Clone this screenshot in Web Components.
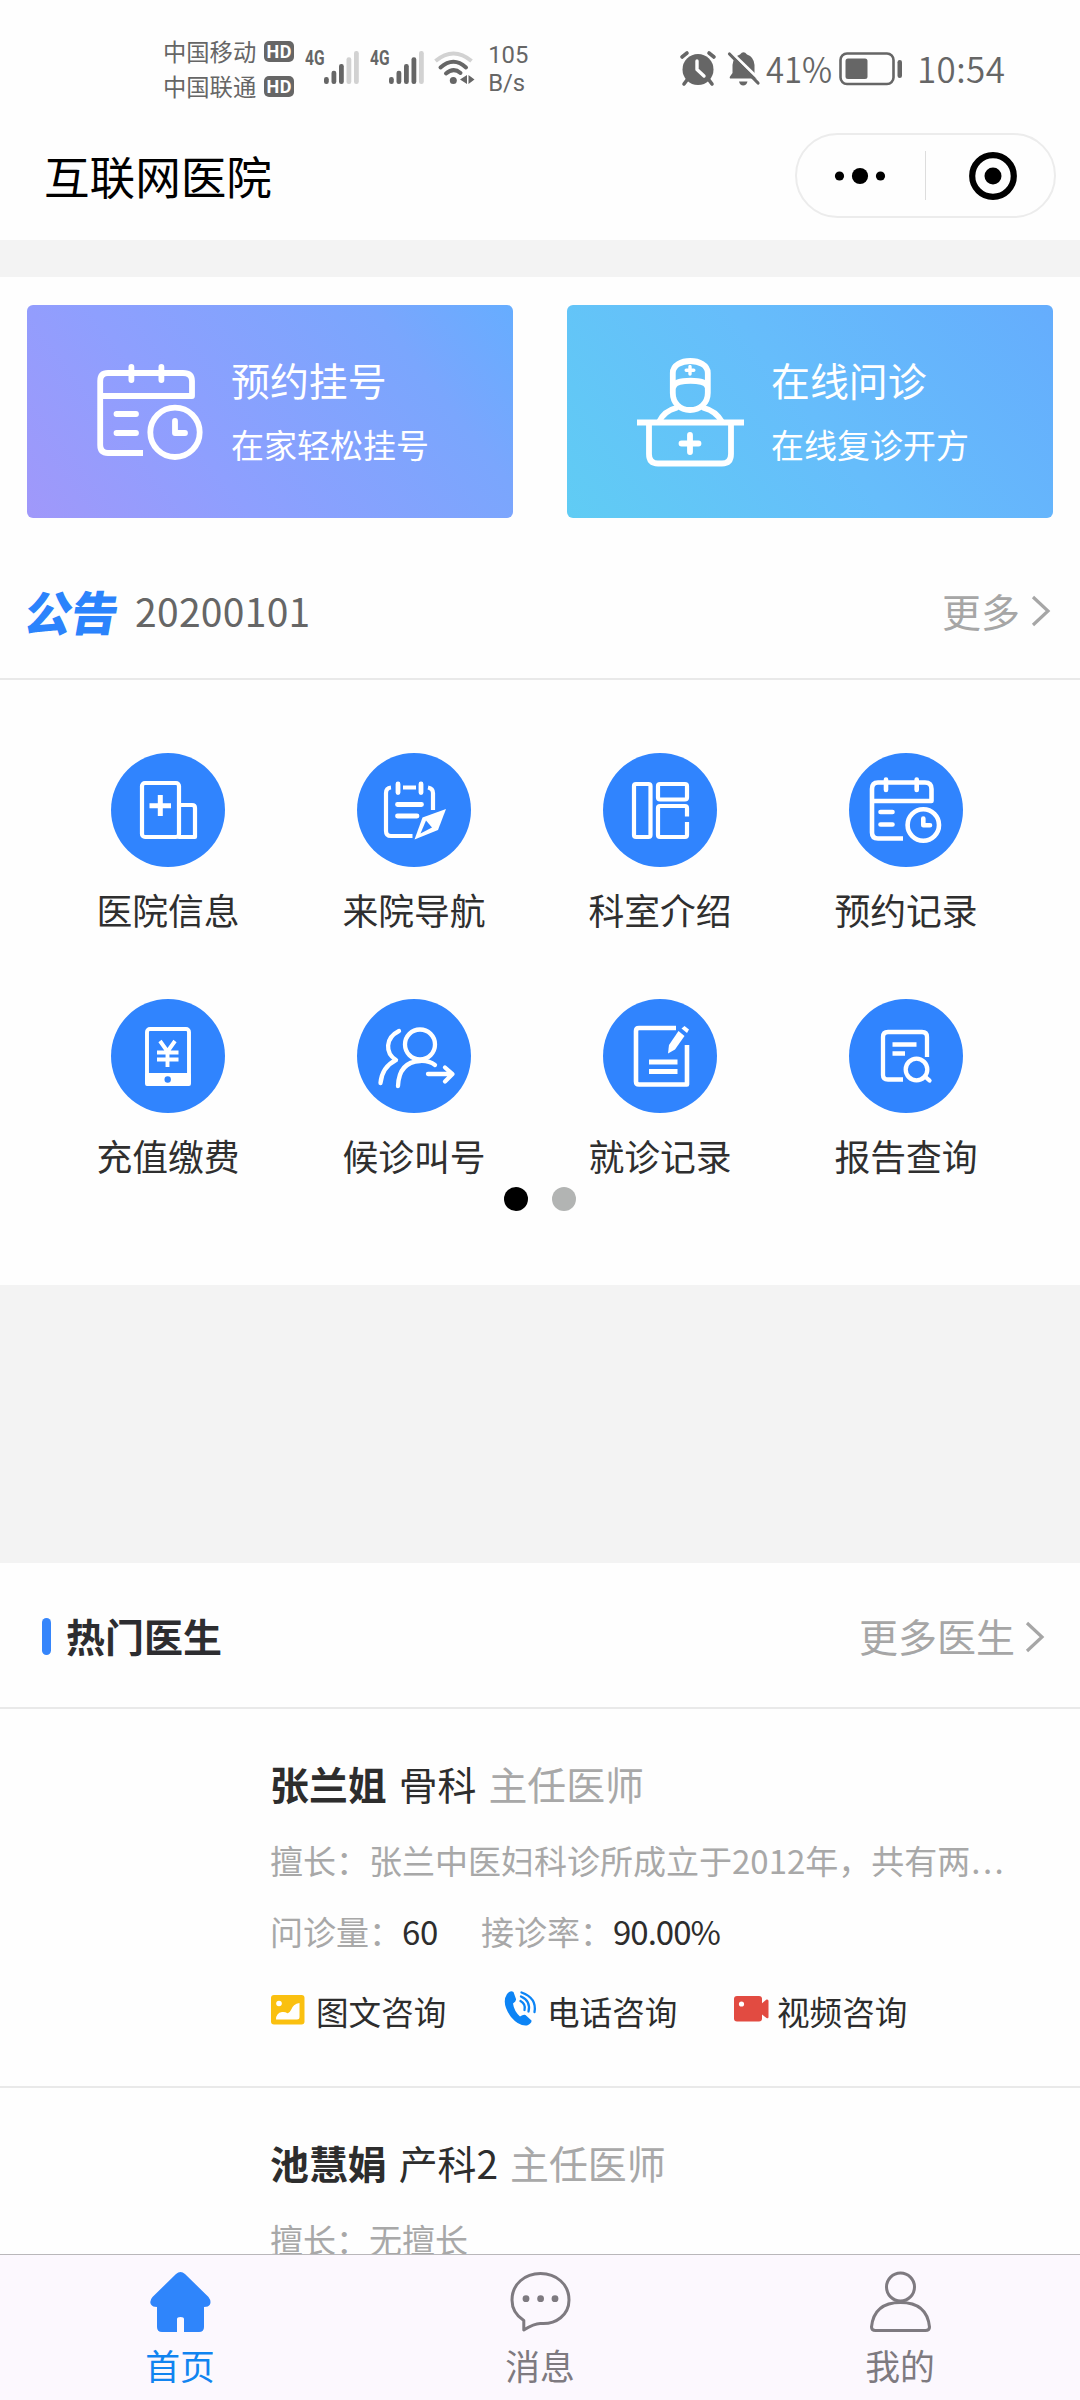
<!DOCTYPE html>
<html lang="zh-CN">
<head>
<meta charset="utf-8">
<title>互联网医院</title>
<style>
  html, body { margin: 0; padding: 0; }
  body { width: 1080px; height: 2400px; overflow: hidden; background: #fefefe;
    font-family: "Noto Sans CJK SC", "Noto Sans", sans-serif; color: #2d2d2d; }
</style>
</head>
<body>
<hospital-app></hospital-app>
<script>
const define = (name, render) => customElements.define(name, class extends HTMLElement {
  constructor() {
    super();
    this.attachShadow({ mode: 'open' });
  }
  connectedCallback() {
    this.shadowRoot.innerHTML = render(k => this.getAttribute(k) || '', this);
  }
});

const W = 'fill="none" stroke="#fff" stroke-linecap="round" stroke-linejoin="round"';
const disc = inner => `<svg width="114" height="114" viewBox="0 0 114 114"><circle cx="57" cy="57" r="57" fill="#3084fe"/>${inner}</svg>`;
const bars = dark => `<svg width="35" height="33" viewBox="0 0 35 33">${[26, 19.7, 13, 6.3, 0].map((y, i) =>
  `<rect x="${i * 7.5}" y="${y}" width="4.8" height="${33 - y}" rx="2.2" fill="${i < dark ? '#666' : '#d2d2d2'}"/>`).join('')}</svg>`;

const ICONS = {
  signal3: bars(3),
  signal4: bars(4),
  wifi: `<svg width="42" height="36" viewBox="0 0 42 36" fill="none" stroke-width="4">
    <path d="M1.5 10Q19.5-5 37.5 10" stroke="#d2d2d2"/>
    <path d="M6.500 16.500Q19.500 5 32 16.500" stroke="#666" stroke-linecap="round"/>
    <path d="M12 22.500Q19.500 16 26.500 22" stroke="#666" stroke-linecap="round"/>
    <circle cx="19.300" cy="29.500" r="3.500" fill="#666"/>
    <path d="M33 24v9l-7-4.500zM34.500 24v9l6-4.500z" fill="#666"/></svg>`,
  alarm: `<svg width="36" height="35" viewBox="0 0 36 35"><circle cx="18" cy="18.500" r="15.500" fill="#666"/>
    <path d="M2 6L7 2M34 6L29 2M7 29L4 33M29 29L32 33" stroke="#666" stroke-width="3.600" stroke-linecap="round"/>
    <path d="M17 10V18.500L24 25" fill="none" stroke="#fefefe" stroke-width="3.400" stroke-linecap="round" stroke-linejoin="round"/></svg>`,
  mute: `<svg width="33" height="35" viewBox="0 0 33 35"><path d="M4 27.500Q2 27.500 3 25.500L5.500 22V14Q6 6 13 3.500Q16.500-1 20 3.500Q27 6 27.500 14V22L30 27.500Z" fill="#666"/>
    <path d="M12 30.500H20.500Q19.500 34.500 16.200 34.500T12 30.500" fill="#666"/>
    <path d="M3 0L34 30" stroke="#fefefe" stroke-width="3"/><path d="M2.500 3L31 32" stroke="#666" stroke-width="3.200" stroke-linecap="round"/></svg>`,
  battery: `<svg width="64" height="34" viewBox="0 0 64 34"><rect x="1.500" y="1.500" width="53" height="30.500" rx="6.500" fill="none" stroke="#666" stroke-width="2.600"/>
    <rect x="6.500" y="6.500" width="22" height="20.500" rx="2.500" fill="#666"/><rect x="58.500" y="8" width="4.500" height="18" rx="2.200" fill="#666"/></svg>`,
  appoint: `<svg width="108" height="98" viewBox="0 0 108 98"><g ${W} stroke-width="5.800">
    <path d="M46 89H11Q3.200 89 3.200 81V17Q3.200 9 11 9H86Q95 9 95 17V32H3.200" style="stroke-linecap:butt"/>
    <path d="M34.400 3V16M64.400 3V16M19.500 50H39M19.500 69H39M78 57V69H88"/><circle cx="78" cy="68.300" r="24.700"/></g></svg>`,
  consult: `<svg width="110" height="112" viewBox="0 0 110 112"><g ${W} stroke-width="5.800">
    <path d="M1 65.500H108" style="stroke-linecap:butt"/><path d="M13 66V97Q13 106.500 22 106.500H86Q95 106.500 95 97V66"/>
    <path d="M54 78V95M45.500 86.500H62.500"/><path d="M36.800 36V16C36.800 0 71.800 0 71.800 16V36C71.800 46 64 53 54 53S36.800 46 36.800 36Z"/>
    <path d="M38 29C40 22 69 22 71 29"/><path d="M40 51Q28 54 23 65M68 51Q80 54 86 65"/><path d="M54 9.500V17M50.200 13.300H57.800" stroke-width="3.400"/></g></svg>`,
  hospital: disc(`<g ${W} stroke-width="4.200"><rect x="31" y="30" width="37" height="54" rx="3"/><path d="M68 52H81Q84 52 84 55V84H68"/>
    <path d="M49.300 42V63M38.500 52.700H60" stroke-width="5" style="stroke-linecap:butt"/></g>`),
  navigate: disc(`<g ${W} stroke-width="4.200"><path d="M55.500 83H34Q29 83 29 78V40Q29 35 34 34.500M46 34.500H59M71 34.500Q76 35.500 76 40V57" style="stroke-linecap:butt"/>
    <path d="M41 31V39.500M64 31V39.500M40.500 51.500H64.500M40.500 63H60" stroke-width="4.800"/></g>
    <path d="M89 56L81 77L57.500 86.500L65.500 64.500Z" fill="#fff"/><path d="M69 67.500L63.500 80.500L75 74.500Z" fill="#3084fe"/>`),
  dept: disc(`<g ${W} stroke-width="4.200" style="stroke-linecap:butt"><rect x="31" y="31" width="16.500" height="53" rx="2"/><rect x="55" y="31" width="29" height="15.500" rx="2"/>
    <path d="M84 63.500V55Q84 53 82 53H57Q55 53 55 55V82Q55 84 57 84H82Q84 84 84 82V69"/></g>`),
  record: disc(`<g ${W} stroke-width="4.600"><path d="M54 85.500H29Q23 85.500 23 79.500V36Q23 29.500 29 29.500H76Q82.500 29.500 82.500 36V48H23" style="stroke-linecap:butt"/>
    <path d="M37 26.500V37M67.700 26.500V37M31.500 59H43.500M31.500 71.500H43.500M74.300 65.500V72.300H81"/><circle cx="74.300" cy="72" r="15.700"/></g>`),
  pay: disc(`<g ${W} stroke-width="3.900"><rect x="36" y="30" width="42" height="55" rx="3"/><path d="M36 76H78V85H36Z" fill="#fff"/>
    <path d="M49 42L56.500 52.500L64 42M56.500 52.500V68M46 53.500H67.500M46 60.500H67.500" style="stroke-linecap:butt" stroke-width="3.900"/></g><circle cx="56.700" cy="80.500" r="3.200" fill="#3084fe"/>`),
  queue: disc(`<g ${W} stroke-width="4.300"><circle cx="63" cy="45.500" r="15"/><path d="M41 87Q42 63 63 62Q72 61.500 78 66M42 32C28 39 28 54 39 61Q25 68 23.500 84"/>
    <path d="M71 75H95M88 68.500L95.500 75L88 82.500"/></g>`),
  visit: disc(`<g ${W} stroke-width="4.600" style="stroke-linecap:butt"><path d="M73 29H36Q33 29 33 32V82.500Q33 85.500 36 85.500H84V46"/><path d="M46 63H74.500M46 72.500H74.500" stroke-width="4.800"/></g>
    <path d="M75.500 32L81.500 37L72 50.500L65 54.500L66 46Z" fill="#fff"/><path d="M78.500 29.500L81.500 27L86 30.500L84 34Z" fill="#fff"/>`),
  report: disc(`<g ${W} stroke-width="4.300"><path d="M54 80.500H39Q34 80.500 34 76V38Q34 33 39 33H73Q78 33 78 38V58" style="stroke-linecap:butt"/>
    <path d="M43.500 45.500H67.500M43.500 54.500H56" style="stroke-linecap:butt" stroke-width="4.600"/><circle cx="67.500" cy="70.500" r="10.800"/><path d="M76.500 78L80.500 81.500"/></g>`),
  picture: `<svg width="34" height="30" viewBox="0 0 34 30"><rect width="33.500" height="29.500" rx="3" fill="#fac010"/><circle cx="8" cy="8.500" r="2.800" fill="#fff"/>
    <path d="M5 24.500Q5 18 11 17Q14 16.500 16 18Q18 19 20 15Q22 9 28.500 8V22Q28.500 24.500 26 24.500Z" fill="#fff"/></svg>`,
  phone: `<svg width="33" height="35" viewBox="0 0 33 35"><path d="M3 3Q6-1 9.500 1L12 8Q12.500 10 9 12.500Q10 20 16 25.500Q19.500 23 21.500 24L27.500 29.500Q28 32 23 34.500Q15 35.500 7 26Q-3 12 3 3Z" fill="#0c84f5"/>
    <path d="M16.500 10Q22 13 20.500 19M17 5.500Q27 10 24.500 20.500M17.500 1.500Q33 7 30.500 21" fill="none" stroke="#0c84f5" stroke-width="2.300" stroke-linecap="round"/></svg>`,
  video: `<svg width="35" height="26" viewBox="0 0 35 26"><rect width="28" height="25.500" rx="3" fill="#e24b41"/><path d="M26 9L32.500 3.500Q34.500 3 34.500 5V21Q34.500 23 32.500 22L26 17Z" fill="#e24b41"/><circle cx="7.500" cy="8" r="2.600" fill="#fff"/></svg>`,
  home: `<svg width="64" height="64" viewBox="0 0 64 64"><path d="M28 4Q32.500 0 37 4L60.500 27Q63.500 31 62 34.500Q60.500 37 56 37V57Q56 62 51 62H36V49Q36 47 32.500 47T29 49V62H14Q9 62 9 57V37Q4.500 37 3 34.500Q1 31 4.500 27Z" fill="#2f85fb"/></svg>`,
  message: `<svg width="64" height="64" viewBox="0 0 64 64"><path d="M15.800 60V50.500C8 45.500 4 38 4 30C4 14 17 3.500 32.500 3.500S61 14 61 30C61 45 48 54.500 33 53.500Q27 53 15.800 60Z" fill="none" stroke="#7e7a80" stroke-width="3" stroke-linejoin="round"/>
    <g fill="#7e7a80"><circle cx="18" cy="28.700" r="3.400"/><circle cx="32.600" cy="28.700" r="3.400"/><circle cx="47" cy="28.700" r="3.400"/></g></svg>`,
  person: `<svg width="66" height="64" viewBox="0 0 66 64" fill="none" stroke="#7e7a80" stroke-width="3"><circle cx="33.500" cy="17" r="14"/><path d="M4.500 57Q7 32.500 33.500 32.500T62.500 57Q62.500 60.500 58.500 60.500H8.500Q4.500 60.500 4.500 57Z"/></svg>`,
};
define('app-icon', a => `<style>:host{display:block;flex:none}svg{display:block;overflow:visible}</style>${ICONS[a('name')]}`);

define('chevron-right', () => `<style>:host{display:block;flex:none;margin-top:2px}svg{display:block}</style>
  <svg width="20" height="32" viewBox="0 0 20 32"><path d="M2 2L17 16L2 30" fill="none" stroke="#a6a6a6" stroke-width="3.200"/></svg>`);

define('carrier-row', a => `<style>
  :host{display:flex;align-items:center;height:35px;font-size:23.300px;line-height:35px;gap:8px;font-weight:400}
  b{display:block;width:30px;height:21px;border-radius:5px;background:#666;color:#fff;font:700 18px/21px Roboto,sans-serif;text-align:center;letter-spacing:.5px}
  </style><span>${a('name')}</span><b>HD</b>`);

define('status-bar', () => `<style>
  :host{display:flex;align-items:flex-start;height:110px;box-sizing:border-box;padding:34px 72px 0 163px;color:#666}
  .g{font:700 21px/22px "Roboto",sans-serif;margin:13px 0 0 11px;width:19px;transform:scaleX(.74);transform-origin:0 0}
  .sig{margin-top:17px}
  .speed{font:400 23.800px/28px Roboto,sans-serif;margin:7px 0 0 12px;flex:1}
  .big{font-size:35px;line-height:50px;font-weight:350;margin-top:9px;white-space:nowrap}
  .pct{width:73px;transform:scaleX(.94);transform-origin:0 0;margin-left:6px}
  .time{width:91px;margin-left:14px;letter-spacing:.4px}
  </style>
  <div><carrier-row name="中国移动"></carrier-row><carrier-row name="中国联通"></carrier-row></div>
  <span class="g">4G</span><app-icon class="sig" name="signal3"></app-icon>
  <span class="g">4G</span><app-icon class="sig" name="signal4"></app-icon>
  <app-icon class="sig" name="wifi" style="margin-left:10px"></app-icon>
  <div class="speed">105<br>B/s</div>
  <app-icon name="alarm" style="margin-top:17px"></app-icon>
  <app-icon name="mute" style="margin:17px 0 0 11px"></app-icon>
  <span class="big pct">41%</span><app-icon name="battery" style="margin-top:18px"></app-icon>
  <span class="big time">10:54</span>`);

define('nav-header', a => `<style>
  :host{display:flex;justify-content:space-between;align-items:flex-start;height:130px;box-sizing:border-box;padding:23px 24px 0 44px;color:#000}
  h1{margin:7px 0 0;font-size:45.600px;line-height:70px;font-weight:400;height:70px}
  .capsule{width:261px;height:85px;box-sizing:border-box;border:2px solid #ececec;border-radius:43px;display:flex;align-items:center}
  .half{flex:1;display:flex;justify-content:center}
  i{width:1px;height:49px;background:#ddd}
  svg{display:block}
  </style><h1>${a('heading')}</h1>
  <div class="capsule"><div class="half"><svg width="52" height="18" style="margin-right:2px"><circle cx="5.500" cy="9" r="4.600"/><circle cx="26" cy="9" r="8.100"/><circle cx="46.500" cy="9" r="4.600"/></svg></div><i></i>
  <div class="half"><svg width="50" height="50" style="margin-left:5px"><circle cx="25" cy="25" r="20.800" fill="none" stroke="#000" stroke-width="6.200"/><circle cx="25" cy="25" r="8.500"/></svg></div></div>`);

define('promo-card', a => `<style>
  :host{display:flex;align-items:flex-start;width:486px;height:213px;border-radius:6px;box-sizing:border-box;color:#fff;background:var(--fill)}
  .pic{width:134px;margin-left:70px;flex:none}
  .t{font-size:38.900px;line-height:56px;margin-top:46px}
  .s{font-size:33px;line-height:48px;margin-top:13px}
  </style><div class="pic"><slot></slot></div><div><div class="t">${a('heading')}</div><div class="s">${a('note')}</div></div>`);

define('notice-bar', a => `<style>
  :host{display:flex;align-items:center;height:162px;box-sizing:border-box;padding:24px 29px 0 26px;border-bottom:2px solid #e9e9e9;font-size:39px;line-height:58px}
  b{font-size:47px;font-weight:900;color:#2b83fc;transform:skewX(-10deg);width:91px;margin:2px 18px 0 0;white-space:nowrap;letter-spacing:-1px}
  .d{flex:1;color:#666;letter-spacing:.3px}.m{color:#a6a6a6;margin-right:11px}
  </style><b>公告</b><span class="d">${a('text')}</span><span class="m">更多</span><chevron-right></chevron-right>`);

define('menu-item', a => `<style>
  :host{display:flex;flex-direction:column;align-items:center;height:246px;width:246px}
  span{font-size:35.800px;line-height:52px;margin-top:16px;color:#2f2f2f}
  </style><app-icon name="${a('icon')}"></app-icon><span><slot></slot></span>`);

define('menu-grid', () => `<style>
  :host{display:block;height:605px;box-sizing:border-box;padding:73px 0 0 45px}
  .g{display:grid;grid-template-columns:repeat(4,246px);grid-auto-rows:246px}
  .dots{display:flex;gap:24px;justify-content:center;margin:-58px 0 0 -45px}
  i{width:24px;height:24px;border-radius:50%;background:#b2b4b3}i:first-child{background:#000}
  </style><div class="g"><slot></slot></div><div class="dots"><i></i><i></i></div>`);

define('section-head', a => `<style>
  :host{display:flex;align-items:center;height:146px;box-sizing:border-box;padding:3px 35px 0 42px;border-bottom:2px solid #e9e9e9;font-size:39px;line-height:58px}
  i{width:9px;height:37px;border-radius:5px;background:#3585fb;margin-right:15px}
  b{flex:1;font-weight:700;color:#2d2d30}.m{color:#a6a6a6;margin-right:10px}
  b,.m{margin-top:-4px}chevron-right{margin-top:0}
  </style><i></i><b>${a('heading')}</b><span class="m">${a('more')}</span><chevron-right></chevron-right>`);

define('consult-tag', a => `<style>
  :host{display:flex;align-items:center;width:${a('w')}px;height:48px;font-size:32.600px;line-height:48px;white-space:nowrap}
  .i{width:${a('lead')}px;display:flex}
  </style><div class="i" style="margin-top:${a('dy')}px"><app-icon name="${a('icon')}"></app-icon></div><slot></slot>`);

define('doctor-card', a => `<style>
  :host{display:block;height:379px;box-sizing:border-box;padding:45px 60px 0 270px;border-bottom:2px solid #e9e9e9;font-size:33px;white-space:nowrap}
  .n{display:flex;gap:12px;font-size:38.900px;line-height:58px}
  .l,.q{color:#a8a8a8;line-height:48px}
  .l{margin-top:24px}.l span{letter-spacing:2.500px;margin-left:1px}
  .q{margin-top:23px;display:flex}.q b{font-weight:400;color:#2d2d2d;margin-right:43px;letter-spacing:-.3px}.q b:last-child{letter-spacing:-1px}
  .c{display:flex;margin:32px 0 0 1px}
  .g{color:#a8a8a8}
  </style><div class="n"><b>${a('name')}</b><span>${a('dept')}</span><span class="g">主任医师</span></div>
  <div class="l">擅长：${a('skill')}${a('more') ? `<span>${a('more')}</span>` : ''}</div>
  ${a('count') ? `<div class="q">问诊量：<b>${a('count')}</b>接诊率：<b>${a('rate')}</b></div>
  <div class="c"><consult-tag icon="picture" w="233" lead="45" dy="-3">图文咨询</consult-tag><consult-tag icon="phone" w="230" lead="43" dy="-5">电话咨询</consult-tag><consult-tag icon="video" w="200" lead="43" dy="-4">视频咨询</consult-tag></div>` : ''}`);

define('tab-item', a => `<style>
  :host{display:flex;flex-direction:column;align-items:center;flex:1;padding-top:15px;font-size:34.800px;line-height:50px;color:#7e7a80}
  :host([active]){color:#1184f0}
  span{margin-top:6px}
  </style><app-icon name="${a('icon')}"></app-icon><span><slot></slot></span>`);

define('tab-bar', () => `<style>
  :host{display:flex;height:146px;box-sizing:border-box;border-top:1px solid #b9b7ba;background:#fcf8fe}
  </style><slot></slot>`);

define('hospital-app', () => `<style>
  :host{display:flex;flex-direction:column;width:1080px;height:2400px;overflow:hidden}
  :host>*{flex:none}
  .gap{background:#f3f3f3}
  .promo{display:flex;justify-content:space-between;padding:28px 27px 0;height:241px;box-sizing:border-box}
  .list{height:545px;overflow:hidden}
  </style>
  <status-bar></status-bar>
  <nav-header heading="互联网医院"></nav-header>
  <div class="gap" style="height:37px"></div>
  <div class="promo">
    <promo-card heading="预约挂号" note="在家轻松挂号" style="--fill:linear-gradient(52deg,#a098fa 0%,#8e9ffe 35%,#7aa6fd 78%,#66adff 100%)"><app-icon name="appoint" style="margin-top:59px"></app-icon></promo-card>
    <promo-card heading="在线问诊" note="在线复诊开方" style="--fill:linear-gradient(52deg,#60ccf4 0%,#66bdfb 50%,#65adfd 100%)"><app-icon name="consult" style="margin:52px 0 0 -1px"></app-icon></promo-card>
  </div>
  <notice-bar text="20200101"></notice-bar>
  <menu-grid>
    <menu-item icon="hospital">医院信息</menu-item><menu-item icon="navigate">来院导航</menu-item>
    <menu-item icon="dept">科室介绍</menu-item><menu-item icon="record">预约记录</menu-item>
    <menu-item icon="pay">充值缴费</menu-item><menu-item icon="queue">候诊叫号</menu-item>
    <menu-item icon="visit">就诊记录</menu-item><menu-item icon="report">报告查询</menu-item>
  </menu-grid>
  <div class="gap" style="height:278px"></div>
  <section-head heading="热门医生" more="更多医生"></section-head>
  <div class="list">
    <doctor-card name="张兰姐" dept="骨科" skill="张兰中医妇科诊所成立于2012年，共有两" more="..." count="60" rate="90.00%"></doctor-card>
    <doctor-card name="池慧娟" dept="产科2" skill="无擅长"></doctor-card>
  </div>
  <tab-bar><tab-item icon="home" active>首页</tab-item><tab-item icon="message">消息</tab-item><tab-item icon="person">我的</tab-item></tab-bar>`);
</script>
</body>
</html>
